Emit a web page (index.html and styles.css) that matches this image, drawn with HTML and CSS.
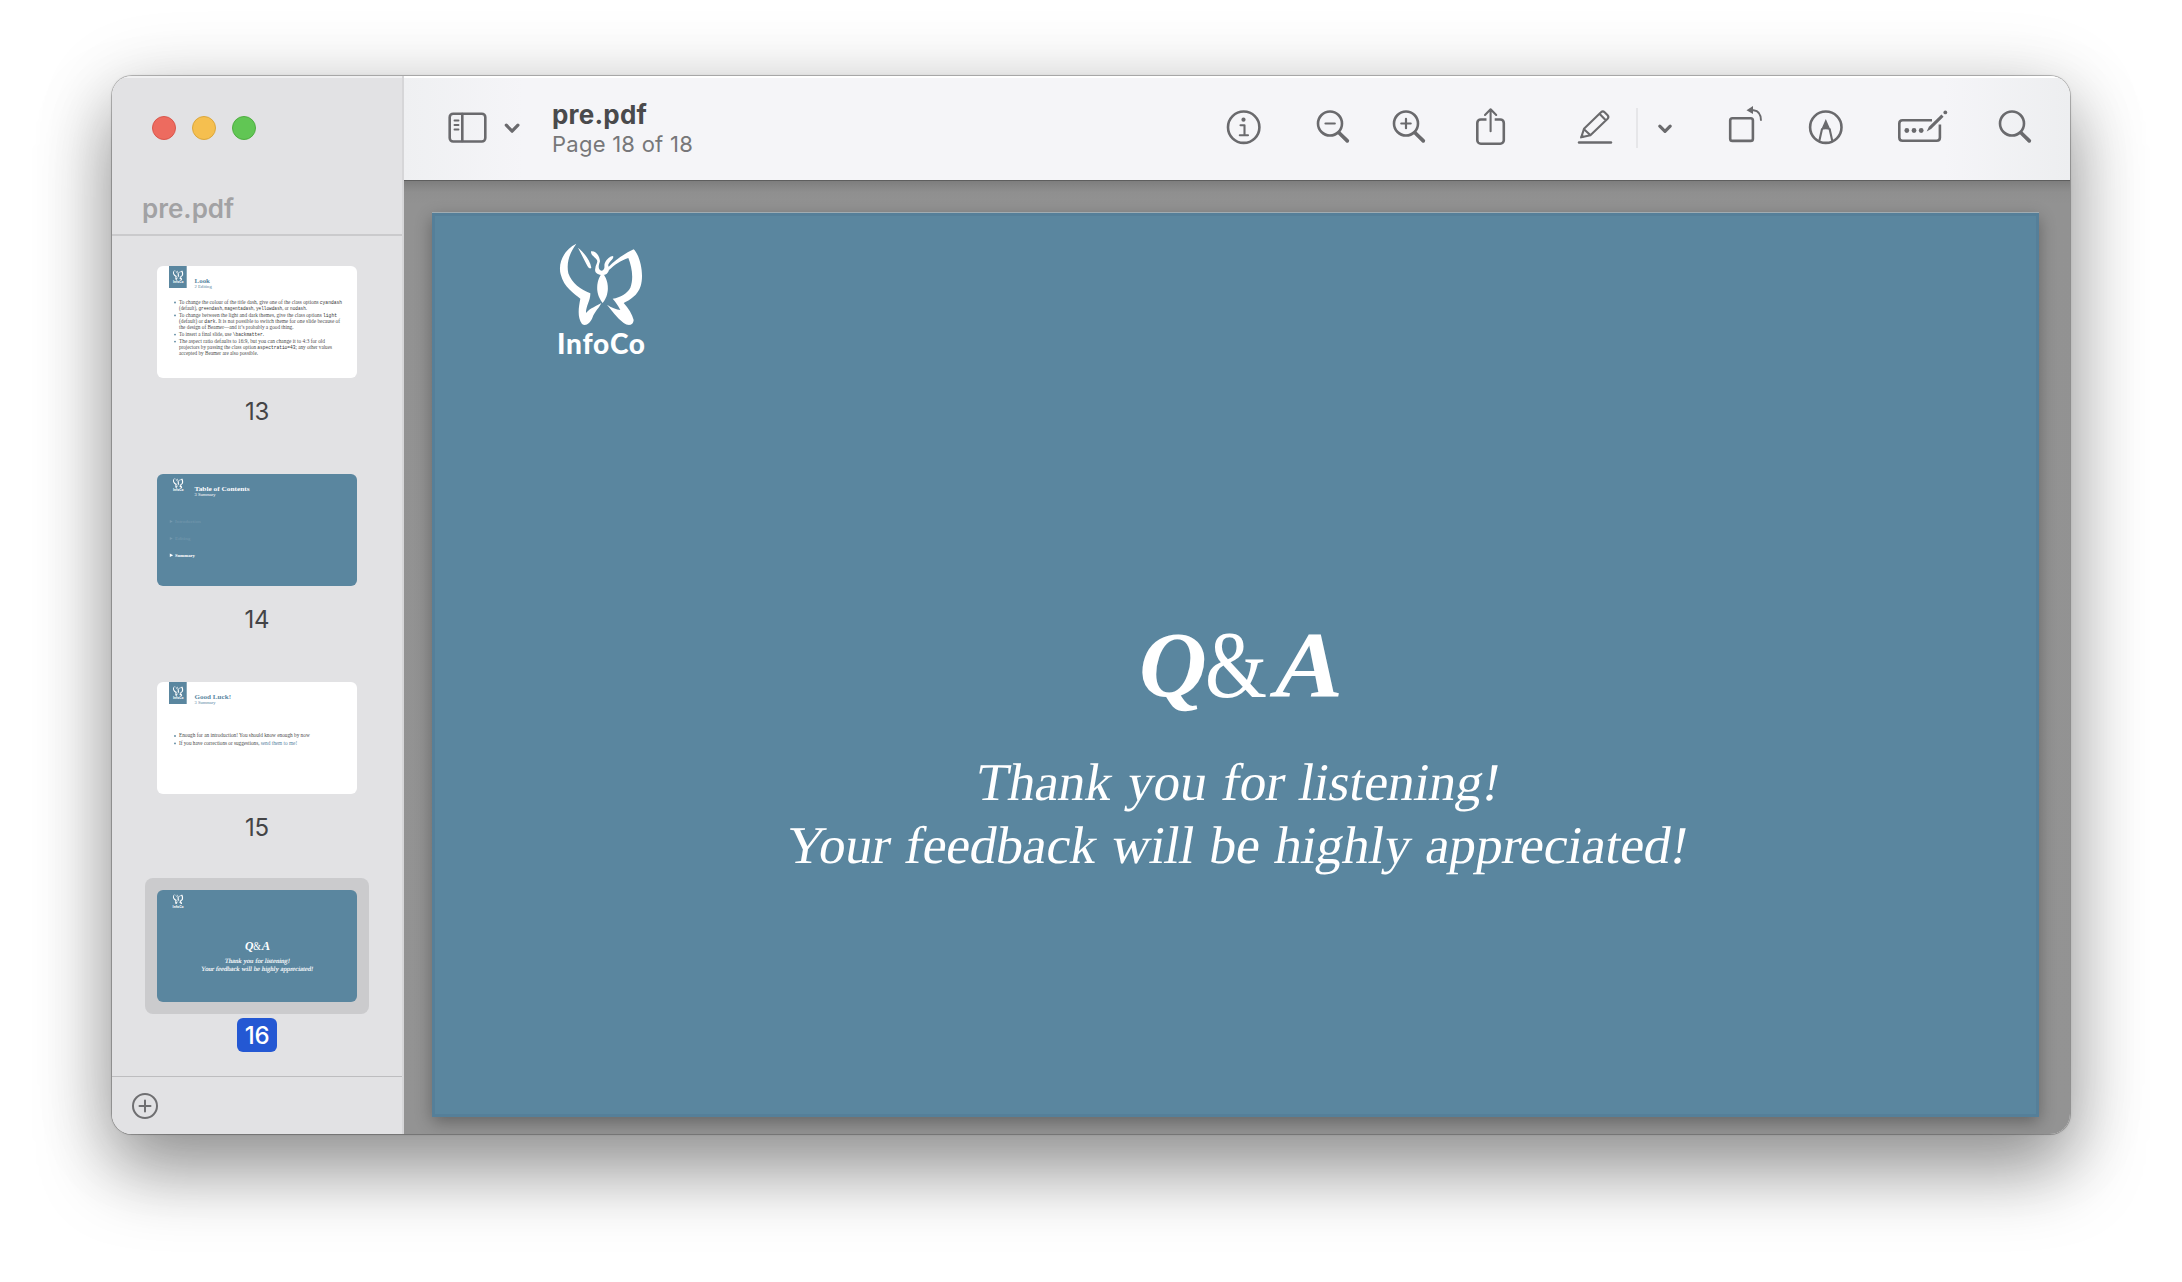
FILE: index.html
```html
<!DOCTYPE html>
<html lang="en">
<head>
<meta charset="utf-8">
<title>pre.pdf</title>
<link rel="stylesheet" href="styles.css">
</head>
<body>
<svg class="defs" width="0" height="0" aria-hidden="true">
  <symbol id="butterfly" viewBox="50 65 270 345">
    <path d="M108 71C72 88 52 128 61 163C70 202 103 222 120 236C115 262 110 292 125 312C136 319 149 311 156 294C163 274 178 262 183 249C170 258 150 263 137 279C136 260 151 240 150 220C122 209 94 190 84 160C77 125 90 96 108 71Z"/>
    <path d="M113 83C130 96 149 120 153 143C148 149 143 142 138 132Z"/>
    <path d="M152 94C166 92 178 107 179 124C176 134 172 143 179 150C184 154 190 151 192 144C193 137 191 133 194 128C200 117 209 108 218 108C221 112 216 117 211 123C205 131 202 134 205 140C225 119 253 101 280 88C302 110 311 168 301 198C293 225 268 241 250 249C264 265 276 283 280 300C278 319 262 317 250 309C229 293 214 271 200 254C212 262 229 269 240 270C233 256 226 246 217 236C241 232 260 221 270 203C281 174 274 140 264 114C241 121 223 135 206 150C204 159 197 165 187 165C173 165 161 159 165 145C165 136 171 131 171 123C168 111 151 109 152 94Z"/>
    <path d="M186 160C171 173 160 218 187 249C213 218 202 173 186 160Z"/>
  </symbol>
</svg>
<main class="window">
  <aside class="sidebar">
    <div class="lights"><i class="red"></i><i class="yellow"></i><i class="green"></i></div>
    <h2 class="doc">pre.pdf</h2>
    <div class="thumbs">
      <figure>
        <div class="frame">
        <svg class="thumb white" viewBox="0 0 200 112">
          <rect class="blue" x="12" width="17.7" height="22"/>
          <use class="light" href="#butterfly" x="15.6" y="3.6" width="11.3" height="14.3"/>
          <text class="brand" x="15.9" y="17" textLength="10.6" font-size="3.4">InfoCo</text>
          <g class="blue head"><text x="37.5" y="17" textLength="15.5" lengthAdjust="spacingAndGlyphs" font-size="6.8">Look</text><text x="37.5" y="22" textLength="17.3" lengthAdjust="spacingAndGlyphs" font-size="4">2 Editing</text></g>
          <g class="blue"><circle cx="18" cy="36.5" r=".9"/><circle cx="18" cy="49.4" r=".9"/><circle cx="18" cy="68.6" r=".9"/><circle cx="18" cy="75.6" r=".9"/></g>
          <g class="copy">
            <text x="22" y="37.7" textLength="163" lengthAdjust="spacingAndGlyphs">To change the colour of the title dash, give one of the class options <tspan>cyandash</tspan></text>
            <text x="22" y="43.7" textLength="128" lengthAdjust="spacingAndGlyphs">(default), <tspan>greendash</tspan>, <tspan>magentadash</tspan>, <tspan>yellowdash</tspan>, or <tspan>nodash</tspan>.</text>
            <text x="22" y="50.7" textLength="158" lengthAdjust="spacingAndGlyphs">To change between the light and dark themes, give the class options <tspan>light</tspan></text>
            <text x="22" y="56.7" textLength="161" lengthAdjust="spacingAndGlyphs">(default) or <tspan>dark</tspan>. It is not possible to switch theme for one slide because of</text>
            <text x="22" y="62.7" textLength="114.5" lengthAdjust="spacingAndGlyphs">the design of Beamer—and it’s probably a good thing.</text>
            <text x="22" y="70" textLength="85" lengthAdjust="spacingAndGlyphs">To insert a final slide, use <tspan>\backmatter</tspan>.</text>
            <text x="22" y="77" textLength="146" lengthAdjust="spacingAndGlyphs">The aspect ratio defaults to 16:9, but you can change it to 4:3 for old</text>
            <text x="22" y="83" textLength="153" lengthAdjust="spacingAndGlyphs">projectors by passing the class option <tspan>aspectratio=43</tspan>; any other values</text>
            <text x="22" y="89" textLength="79" lengthAdjust="spacingAndGlyphs">accepted by Beamer are also possible.</text>
          </g>
        </svg>
        </div>
        <figcaption>13</figcaption>
      </figure>
      <figure>
        <div class="frame">
        <svg class="thumb" viewBox="0 0 200 112">
          <use class="light" href="#butterfly" x="15.6" y="3.6" width="11.3" height="14.3"/>
          <text class="brand" x="15.9" y="17" textLength="10.6" font-size="3.4">InfoCo</text>
          <g class="light head"><text x="37.5" y="17.4" textLength="55" lengthAdjust="spacingAndGlyphs" font-size="6.8">Table of Contents</text><text x="37.5" y="22" textLength="21" lengthAdjust="spacingAndGlyphs" font-size="4">3 Summary</text></g>
          <g class="faint"><path d="M12.8 45.9v3l3-1.5zM12.8 63v3l3-1.5z"/><text x="18" y="49" textLength="26" lengthAdjust="spacingAndGlyphs">Introduction</text><text x="18" y="66" textLength="15.5" lengthAdjust="spacingAndGlyphs">Editing</text></g>
          <g class="light strong"><path d="M12.8 79.6v3.4l3.4-1.7z"/><text x="18" y="82.9" textLength="20" lengthAdjust="spacingAndGlyphs">Summary</text></g>
        </svg>
        </div>
        <figcaption>14</figcaption>
      </figure>
      <figure>
        <div class="frame">
        <svg class="thumb white" viewBox="0 0 200 112">
          <rect class="blue" x="12" width="17.7" height="22"/>
          <use class="light" href="#butterfly" x="15.6" y="3.6" width="11.3" height="14.3"/>
          <text class="brand" x="15.9" y="17" textLength="10.6" font-size="3.4">InfoCo</text>
          <g class="blue head"><text x="37.5" y="17" textLength="36.5" lengthAdjust="spacingAndGlyphs" font-size="6.8">Good Luck!</text><text x="37.5" y="22" textLength="21" lengthAdjust="spacingAndGlyphs" font-size="4">3 Summary</text></g>
          <g class="blue"><circle cx="18" cy="54" r=".9"/><circle cx="18" cy="61.4" r=".9"/></g>
          <g class="copy">
            <text x="22" y="55" textLength="130.7" lengthAdjust="spacingAndGlyphs">Enough for an introduction! You should know enough by now</text>
            <text x="22" y="62.5" textLength="80.5" lengthAdjust="spacingAndGlyphs">If you have corrections or suggestions,</text>
            <text class="link" x="103.7" y="62.5" textLength="36.5" lengthAdjust="spacingAndGlyphs">send them to me!</text>
          </g>
        </svg>
        </div>
        <figcaption>15</figcaption>
      </figure>
      <figure class="selected">
        <div class="frame">
        <svg class="thumb small" viewBox="0 0 1608 900">
          <use class="light" href="#butterfly" x="125" y="29" width="90" height="115"/>
          <text class="brand" x="125" y="142" textLength="88" font-size="28">InfoCo</text>
          <g class="light qa"><text x="707" y="484" class="cal">Q</text><text x="773" y="485" class="amp" textLength="62" lengthAdjust="spacingAndGlyphs">&amp;</text><text x="843" y="484" class="cal" textLength="68" lengthAdjust="spacingAndGlyphs">A</text></g>
          <g class="light slanted"><text transform="translate(542 584) skewX(-9.5)" textLength="524" lengthAdjust="spacingAndGlyphs">Thank you for listening!</text><text transform="translate(352 649) skewX(-9.5)" textLength="902" lengthAdjust="spacingAndGlyphs">Your feedback will be highly appreciated!</text></g>
        </svg>
        </div>
        <figcaption>16</figcaption>
      </figure>
    </div>
    <footer class="foot">
      <svg width="28" height="28" viewBox="0 0 28 28" class="icon"><circle cx="14" cy="14" r="12"/><path d="M14 8.5v11M8.5 14h11"/></svg>
    </footer>
  </aside>
  <section class="content">
    <header class="toolbar">
      <svg class="icon i-side" width="50" height="52" viewBox="442 102 50 52"><rect x="449.7" y="113.7" width="35.6" height="27.8" rx="3.5"/><path d="M462.3 114v27"/><path class="thin" d="M454.5 120.5h4M454.5 125h4M454.5 129.5h4"/></svg>
      <svg class="icon i-chev" width="20" height="52" viewBox="502 102 20 52"><path class="heavy" d="M506.3 125.2l5.8 6 5.8-6"/></svg>
      <div class="title"><h1>pre.pdf</h1><p>Page 18 of 18</p></div>
      <svg class="icon i-info" width="44" height="52" viewBox="1222 102 44 52"><circle cx="1243.7" cy="127.2" r="15.7"/><circle class="solid" cx="1243.5" cy="119.7" r="2.1"/><path d="M1240.5 125.3h4v9.7M1239.8 135.2h8.2" stroke-width="2.1"/></svg>
      <svg class="icon i-out" width="44" height="52" viewBox="1312 102 44 52"><circle cx="1330" cy="123.5" r="12"/><path class="heavy" d="M1339 132.7l8.3 8.2"/><path d="M1325.5 123.5h9.3" stroke-width="2.2"/></svg>
      <svg class="icon i-in" width="44" height="52" viewBox="1388 102 44 52"><circle cx="1406" cy="123.5" r="12"/><path class="heavy" d="M1415 132.7l8.3 8.2"/><path d="M1401.3 123.5h9.4M1406 118.8v9.4" stroke-width="2.2"/></svg>
      <svg class="icon i-share" width="44" height="52" viewBox="1468 102 44 52"><path class="butt" d="M1486.5 119.5h-5.7a3.5 3.5 0 0 0-3.5 3.5v17.2a3.5 3.5 0 0 0 3.5 3.5h19.5a3.5 3.5 0 0 0 3.5-3.5v-17.2a3.5 3.5 0 0 0-3.5-3.5h-5.6"/><path d="M1490.6 131.3v-21.8M1485 115l5.6-5.7 5.6 5.7" stroke-width="2.1"/></svg>
      <svg class="icon i-pen" width="44" height="52" viewBox="1573 102 44 52"><path d="M1579 142.5h32" stroke-width="2.4"/><path d="M1581.3 137.3l2.7-8.6 17-16.5q1.8-1.6 3.6 0l3 3q1.6 1.8 0 3.5l-17.2 16.5zM1584 129.3l6 5.5M1599.5 113.7l6 6.3" stroke-width="2.1"/><path class="solid" d="M1580 138.6l1.4-4.4 3.8 2.6z"/></svg>
      <span class="divider"></span>
      <svg class="icon i-chev2" width="20" height="52" viewBox="1655 102 20 52"><path class="heavy" d="M1659.8 126.2l5.2 5.1 5.2-5.1"/></svg>
      <svg class="icon i-rot" width="44" height="52" viewBox="1723 102 44 52"><rect x="1730.2" y="118.2" width="22.7" height="22.7" rx="2.2"/><path class="butt" d="M1752 110.2h1.5c4.6.4 7.5 3.5 7.5 10.5" stroke-width="1.9"/><path class="solid" d="M1746.5 110.3l6.5-4.3v8z"/></svg>
      <svg class="icon i-mark" width="44" height="52" viewBox="1804 102 44 52"><circle cx="1825.8" cy="127.2" r="15.7"/><path class="butt" d="M1819.3 141l2.8-12.5M1832.3 141l-2.8-12.5" stroke-width="2.1"/><path class="solid" d="M1825.8 119l4.8 11q-4.8-1.7-9.6 0z"/></svg>
      <svg class="icon i-form" width="60" height="52" viewBox="1892 102 60 52"><path class="butt" d="M1932 120.2h-29.5q-3.2 0-3.2 3.2v14.2q0 3.2 3.2 3.2h34.2q3.2 0 3.2-3.2v-13"/><circle class="solid" cx="1906.8" cy="130.5" r="2.4"/><circle class="solid" cx="1914" cy="130.5" r="2.4"/><circle class="solid" cx="1921.2" cy="130.5" r="2.4"/><path class="solid" d="M1926.7 131.6l2.2-4.9 12.5-12.2 2.2 2.2-12.5 12.4z"/><circle class="solid" cx="1945.3" cy="112.4" r="1.9"/></svg>
      <svg class="icon i-find" width="44" height="52" viewBox="1994 102 44 52"><circle cx="2012" cy="123.5" r="12"/><path class="heavy" d="M2021 132.7l8.3 8.2"/></svg>
    </header>
    <div class="canvas">
      <svg class="page" width="1607" height="904" viewBox="0 0 1607 904">
        <use class="light" href="#butterfly" x="125" y="28.7" width="90" height="115"/>
        <text class="brand" x="125" y="141" textLength="88" font-size="28">InfoCo</text>
        <g class="light qa"><text x="707" y="483" class="cal">Q</text><text x="773" y="484" class="amp" textLength="62" lengthAdjust="spacingAndGlyphs">&amp;</text><text x="843" y="483" class="cal" textLength="68" lengthAdjust="spacingAndGlyphs">A</text></g>
        <g class="light slanted"><text transform="translate(542 586.5) skewX(-9.5)" textLength="524" lengthAdjust="spacingAndGlyphs">Thank you for listening!</text><text transform="translate(352 649.5) skewX(-9.5)" textLength="902" lengthAdjust="spacingAndGlyphs">Your feedback will be highly appreciated!</text></g>
      </svg>
    </div>
  </section>
</main>
</body>
</html>
```
FILE: styles.css
```css
* { box-sizing: border-box; }
html, body { margin: 0; height: 100%; background: #fff; overflow: hidden; }
body { padding: 76px 0 0 112px; font-family: Inter, "Liberation Sans", sans-serif; }
.defs { display: block; width: 0; height: 0; }
.window {
  display: flex; width: 1958px; height: 1058px; border-radius: 20px; overflow: hidden;
  box-shadow: 0 0 0 1px rgba(0,0,0,.22), 0 0 3px rgba(0,0,0,.15), 0 38px 72px rgba(0,0,0,.36), 0 10px 80px rgba(0,0,0,.16);
}
.sidebar {
  width: 292px; flex: none; background: #e2e2e4; display: flex; flex-direction: column;
  border-right: 2px solid #d6d6d8; box-shadow: inset 0 2px 0 #f0f0f1;
}
.lights { display: flex; gap: 16px; padding: 40px 0 0 40px; }
.lights i { width: 24px; height: 24px; border-radius: 50%; border: 1px solid; }
.lights .red { background: #ed6b5f; border-color: #d9574c; }
.lights .yellow { background: #f5bf4f; border-color: #dba73c; }
.lights .green { background: #61c654; border-color: #4fae41; }
.doc {
  margin: 0; height: 96px; padding: 51px 0 0 30px; border-bottom: 2px solid #cacacc;
  font-size: 26px; line-height: 36px; font-weight: 600; color: #a2a2a4;
}
.thumbs { padding-top: 20px; display: flex; flex-direction: column; align-items: center; height: 840px; flex: none; overflow: hidden; }
figure { margin: 0; height: 208px; width: 224px; flex: none; display: flex; flex-direction: column; align-items: center; }
.frame { width: 224px; height: 136px; padding: 12px; border-radius: 8px; flex: none; margin-top: -2px; }
.thumb { display: block; width: 200px; height: 112px; border-radius: 6px; background: #5a869f; }
.thumb.white { background: #fff; }
figcaption { margin-top: 4px; height: 34px; width: 40px; text-align: center; border-radius: 6px; font-size: 24px; line-height: 35px; color: #444446; letter-spacing: -.2px; }
.selected .frame { background: #cbcbcd; }
.selected figcaption { background: #2458d3; color: #fff; font-weight: 500; }
.foot { border-top: 1px solid #bdbdbf; flex: 1; padding: 15px 0 0 19px; }
.foot .icon { display: block; stroke: #6f6f71; stroke-width: 2; }
.content { flex: 1; min-width: 0; display: flex; flex-direction: column; }
.toolbar {
  height: 104px; flex: none; display: flex; align-items: center; padding-left: 38px;
  background: linear-gradient(90deg, #eff0f2, #f5f5f8 120px, #f5f5f8 1540px, #edeef0);
  box-shadow: inset 0 2px 0 #fff, 0 1px 0 #5e5e5e; z-index: 1;
}
.icon { flex: none; fill: none; stroke: #6a6a6d; stroke-width: 2.6; stroke-linecap: round; stroke-linejoin: round; }
.icon .solid { fill: #6a6a6d; stroke: none; }
.icon .heavy { stroke-width: 3.7; }
.icon .thin { stroke-width: 1.9; }
.icon .butt { stroke-linecap: butt; }
.i-chev { margin-left: 10px; }
.i-chev .heavy, .i-chev2 .heavy { stroke-width: 3.2; }
.title { width: 220px; margin-left: 30px; margin-right: -1px; padding-top: 2px; }
.title h1 { margin: 0; font-size: 26px; line-height: 30px; font-weight: 700; color: #4a4a4c; letter-spacing: .2px; }
.title p { margin: 0; font-size: 22px; line-height: 28px; color: #777779; letter-spacing: .25px; }
.i-info { margin-left: 451px; }
.i-out { margin-left: 46px; }
.i-in { margin-left: 32px; }
.i-share { margin-left: 36px; }
.i-pen { margin-left: 61px; }
.divider { width: 2px; height: 40px; margin-left: 19px; background: #e6e6e9; }
.i-chev2 { margin-left: 17px; }
.i-rot { margin-left: 48px; }
.i-mark { margin-left: 37px; }
.i-form { margin-left: 44px; }
.i-find { margin-left: 42px; }
.canvas {
  flex: 1; padding: 33px 0 0 28px;
  background: linear-gradient(#7c7c7c, #8f8f8f 12px, #929292 24px, #939393);
}
.page {
  display: block; background: #5a869f;
  box-shadow: 0 -1px 0 #a0acb2, inset 0 0 0 3px #557f99, 0 5px 16px rgba(0,0,0,.32);
}
.blue { fill: #5a869f; }
.light { fill: #fff; }
.brand { font-family: Lato, sans-serif; font-weight: 900; fill: #fff; }
.head { font-family: "Liberation Serif", serif; }
.head text:first-child { font-weight: 700; }
.copy { font-family: "Liberation Serif", serif; font-size: 5.1px; fill: #4c4c4c; }
.copy .link { fill: #5a869f; }
.copy tspan { font-family: "Liberation Mono", monospace; font-size: 4.5px; fill: #333; }
.faint { fill: #7599ae; font: 4.8px "Liberation Serif", serif; }
.strong { font: 700 5px "Liberation Serif", serif; }
.slanted { font: 53px "Liberation Serif", serif; word-spacing: 2px; }
.small .slanted { stroke: #fff; stroke-width: 1; }
.cal { font: italic 700 94px "Liberation Serif", serif; }
.amp { font: 96px "Liberation Serif", serif; }
```
